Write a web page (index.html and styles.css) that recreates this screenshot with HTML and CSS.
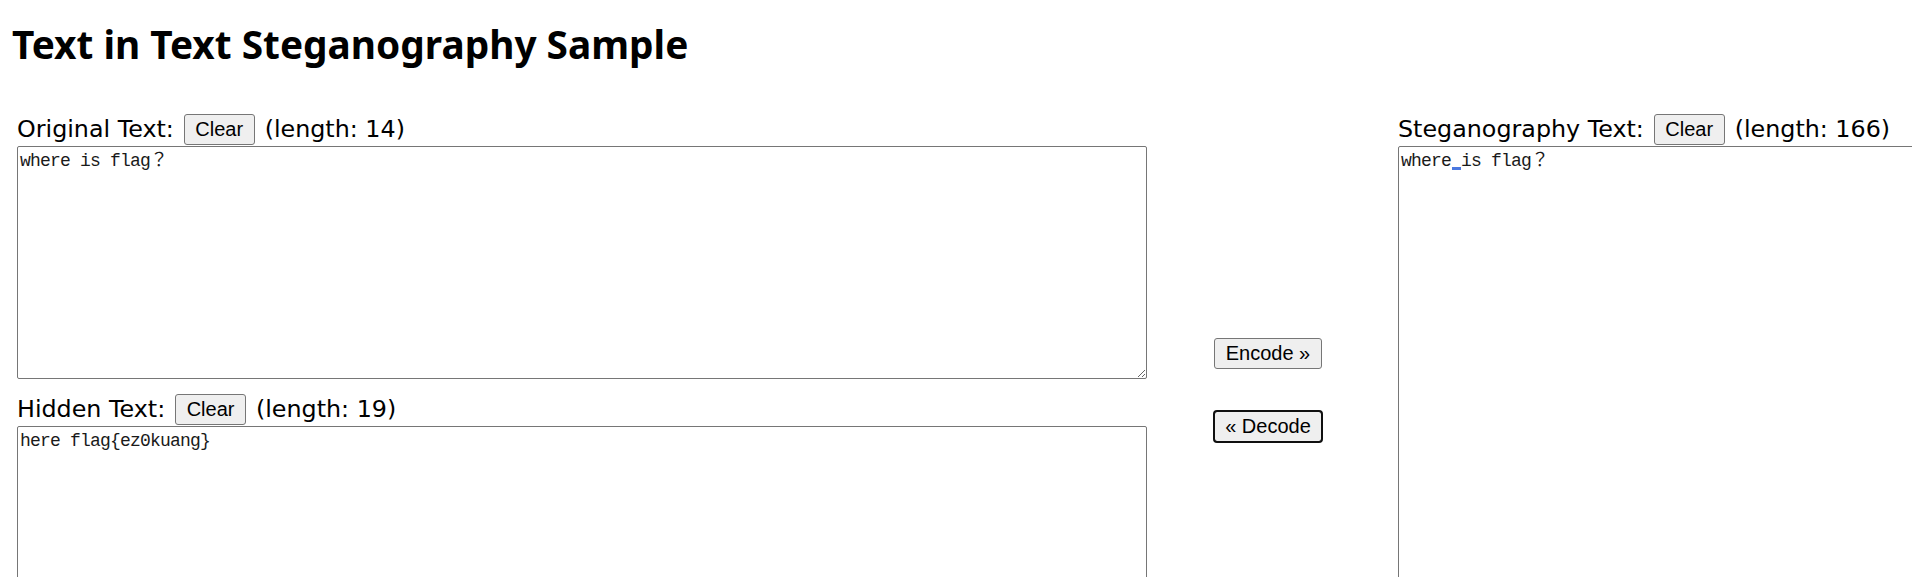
FILE: index.html
```html
<!DOCTYPE html>
<html lang="en">
<head>
<meta charset="utf-8">
<title>Text in Text Steganography Sample</title>
<link rel="stylesheet" href="styles.css">
</head>
<body>
<h1 class="title">Text in Text Steganography Sample</h1>
<div class="layout">
  <div class="col-main">
    <div class="field-head"><span>Original Text:</span><button class="btn">Clear</button><span>(length: 14)</span></div>
    <textarea class="box">where is flag？</textarea>
    <div class="field-head field-head-next"><span>Hidden Text:</span><button class="btn">Clear</button><span>(length: 19)</span></div>
    <textarea class="box">here flag{ez0kuang}</textarea>
  </div>
  <div class="col-actions">
    <button class="btn">Encode »</button>
    <button class="btn btn-focus">« Decode</button>
  </div>
  <div class="col-main">
    <div class="field-head"><span>Steganography Text:</span><button class="btn">Clear</button><span>(length: 166)</span></div>
    <div class="box-wrap">
      <textarea class="box box-tall">where is flag？</textarea>
      <span class="mark"></span>
    </div>
  </div>
</div>
</body>
</html>
```
FILE: styles.css
```css
html {
  overflow: hidden;
}
body {
  margin: 0;
  background: #fff;
  color: #000;
  font-family: "DejaVu Sans", sans-serif;
  font-size: 23.8px;
}
.title {
  margin: 0;
  padding: 18px 0 0 12px;
  font-family: "Noto Sans", sans-serif;
  font-weight: 700;
  font-size: 38.8px;
  line-height: 52px;
}
.layout {
  display: flex;
  align-items: flex-start;
  padding: 42px 0 0 17px;
}
.col-main {
  flex: none;
  width: 1130px;
  display: flex;
  flex-direction: column;
}
.field-head {
  display: flex;
  align-items: center;
  gap: 10px;
  height: 34px;
  white-space: nowrap;
}
.field-head-next {
  margin-top: 13px;
}
.btn {
  height: 31px;
  margin: 0;
  padding: 0 10.5px;
  border: 1px solid #767676;
  border-radius: 3px;
  background: #efefef;
  color: #000;
  font-family: "Liberation Sans", Arial, sans-serif;
  font-size: 20px;
  line-height: 23px;
  white-space: nowrap;
}
.btn-focus {
  outline: 2px solid #101010;
  outline-offset: -1px;
}
.box {
  display: block;
  box-sizing: border-box;
  width: 1130px;
  height: 233px;
  margin: 0;
  padding: 4px 2px;
  border: 1px solid #767676;
  border-radius: 2px;
  background: #fff;
  color: #1a1a1a;
  font-family: "Liberation Mono", "Noto Sans CJK JP", monospace;
  font-size: 18px;
  line-height: 20px;
  letter-spacing: -0.8px;
  resize: both;
}
.box-tall {
  height: 520px;
}
.box-wrap {
  position: relative;
}
.mark {
  position: absolute;
  left: 54px;
  top: 21px;
  width: 9px;
  height: 3px;
  background: #4a78e0;
}
.col-actions {
  flex: none;
  box-sizing: border-box;
  width: 251px;
  padding: 226px 9px 0 0;
  display: flex;
  flex-direction: column;
  align-items: center;
  gap: 42px;
}
```
